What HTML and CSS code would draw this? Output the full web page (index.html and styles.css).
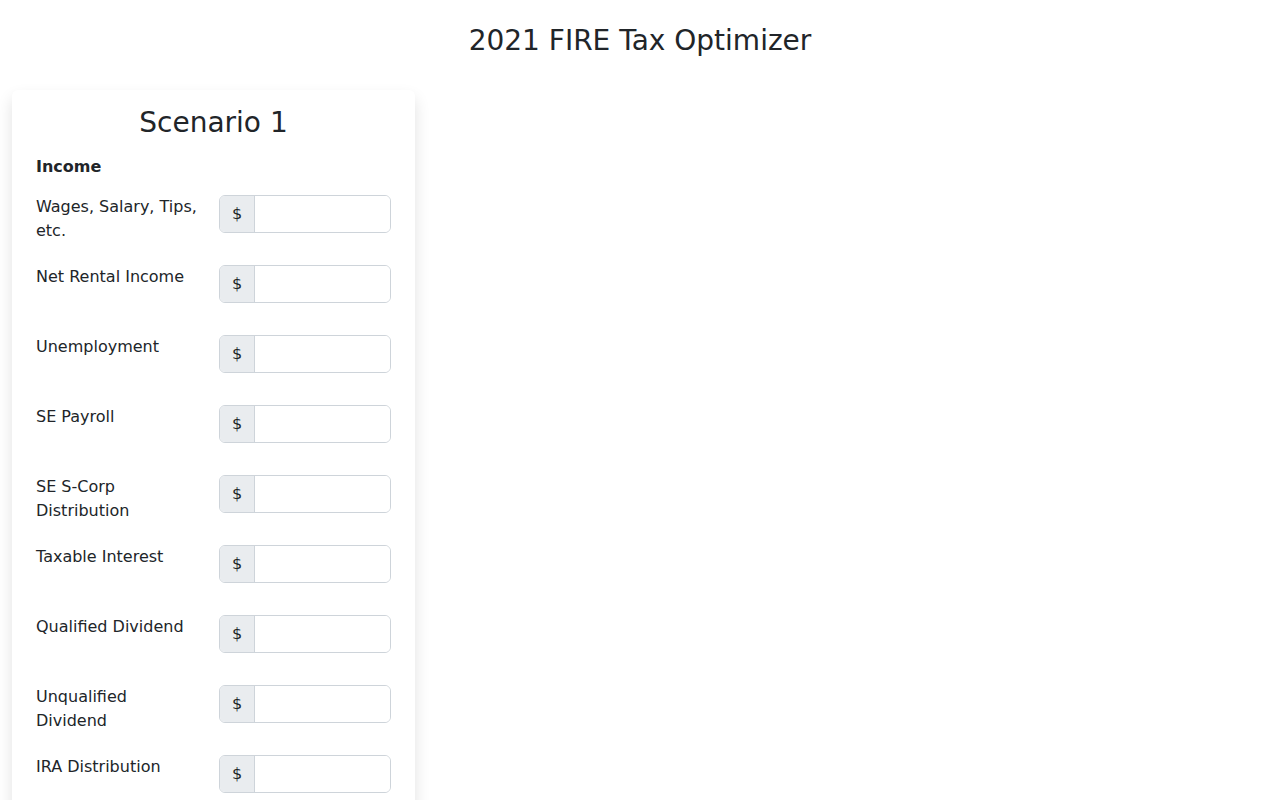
FILE: index.html
```html
<!DOCTYPE html>
<html>
  <head>
    <meta name="viewport" content="width=device-width, initial-scale=1">
    <link rel="stylesheet" href="styles.css">
  </head>
  <body>
    <h1 class="page-title">2021 FIRE Tax Optimizer</h1>
    <div class="scenarios">
      <div class="card">
        <h2 class="card-title">Scenario 1</h2>
        <p class="section-title">Income</p>

        <div class="field-row">
          <label class="field-label">Wages, Salary, Tips, etc.</label>
          <div class="input-group">
            <span class="input-prefix">$</span>
            <input type="text" class="input-box">
          </div>
        </div>

        <div class="field-row">
          <label class="field-label">Net Rental Income</label>
          <div class="input-group">
            <span class="input-prefix">$</span>
            <input type="text" class="input-box">
          </div>
        </div>

        <div class="field-row">
          <label class="field-label">Unemployment</label>
          <div class="input-group">
            <span class="input-prefix">$</span>
            <input type="text" class="input-box">
          </div>
        </div>

        <div class="field-row">
          <label class="field-label">SE Payroll</label>
          <div class="input-group">
            <span class="input-prefix">$</span>
            <input type="text" class="input-box">
          </div>
        </div>

        <div class="field-row">
          <label class="field-label">SE S-Corp Distribution</label>
          <div class="input-group">
            <span class="input-prefix">$</span>
            <input type="text" class="input-box">
          </div>
        </div>

        <div class="field-row">
          <label class="field-label">Taxable Interest</label>
          <div class="input-group">
            <span class="input-prefix">$</span>
            <input type="text" class="input-box">
          </div>
        </div>

        <div class="field-row">
          <label class="field-label">Qualified Dividend</label>
          <div class="input-group">
            <span class="input-prefix">$</span>
            <input type="text" class="input-box">
          </div>
        </div>

        <div class="field-row">
          <label class="field-label">Unqualified Dividend</label>
          <div class="input-group">
            <span class="input-prefix">$</span>
            <input type="text" class="input-box">
          </div>
        </div>

        <div class="field-row">
          <label class="field-label">IRA Distribution</label>
          <div class="input-group">
            <span class="input-prefix">$</span>
            <input type="text" class="input-box">
          </div>
        </div>
      </div>
    </div>
  </body>
</html>
```

FILE: styles.css
```css
body {
  margin: 0;
  font-family: "DejaVu Sans", sans-serif;
  font-size: 16px;
  line-height: 1.5;
  color: #212529;
  background-color: #fff;
}

.page-title {
  text-align: center;
  font-size: 28px;
  font-weight: 500;
  line-height: 1.2;
  margin: 24px 0 0 0;
}

.scenarios {
  display: flex;
  padding: 0 12px;
  margin-top: 32px;
}

.card {
  width: 403px;
  box-sizing: border-box;
  background: #fff;
  border-radius: 6px;
  box-shadow: 0 0.5rem 1rem rgba(0, 0, 0, 0.12);
  padding: 15px 24px 24px 24px;
}

.card-title {
  text-align: center;
  font-size: 28px;
  font-weight: 400;
  line-height: 1.2;
  margin: 1px 0 0 0;
}

.section-title {
  font-weight: bold;
  margin: 16px 0 16px 0;
}

.field-row {
  display: flex;
  align-items: flex-start;
  justify-content: space-between;
  min-height: 54px;
  margin-bottom: 16px;
}

.field-label {
  width: 164px;
}

.input-group {
  display: flex;
  width: 172px;
  height: 38px;
  box-sizing: border-box;
  border: 1px solid #ced4da;
  border-radius: 6px;
  overflow: hidden;
}

.input-prefix {
  display: flex;
  align-items: center;
  justify-content: center;
  width: 34px;
  background-color: #e9ecef;
  border-right: 1px solid #ced4da;
  font-size: 16px;
}

.input-box {
  flex: 1;
  min-width: 0;
  border: none;
  outline: none;
  padding: 6px 12px;
  font-family: inherit;
  font-size: 16px;
}
```
